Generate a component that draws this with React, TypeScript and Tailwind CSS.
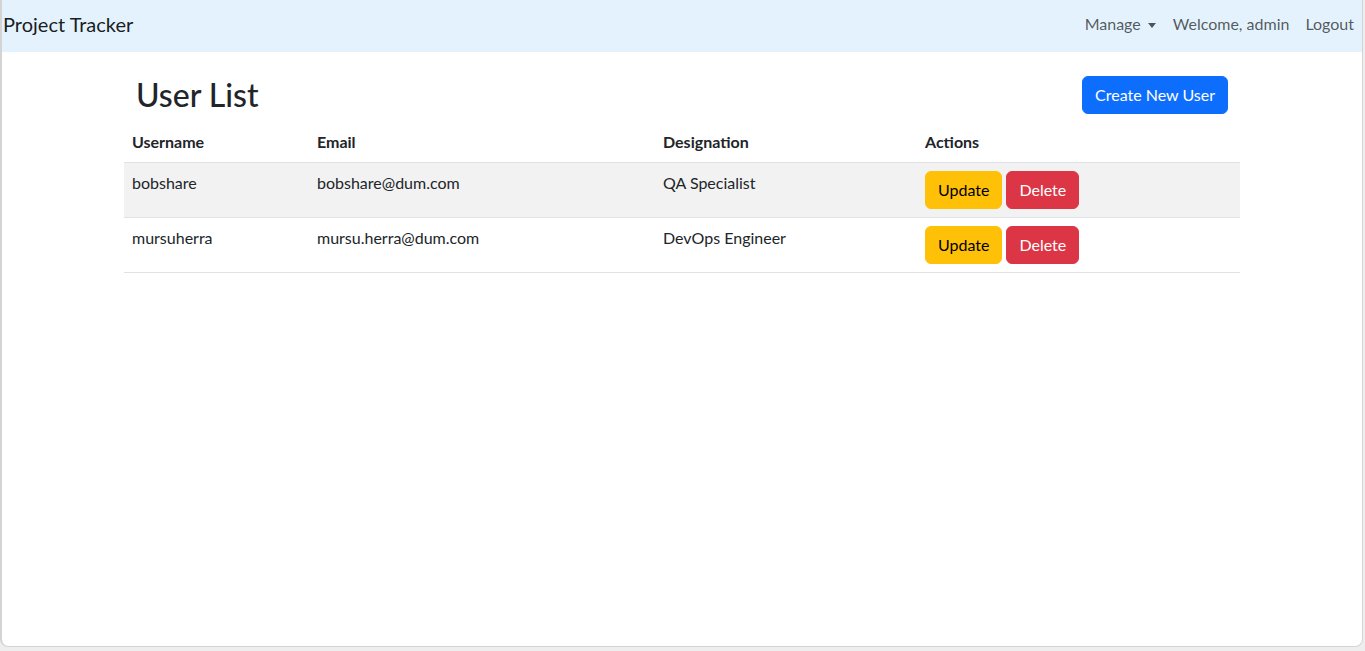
import React from 'react';

type User = {
  username: string;
  email: string;
  designation: string;
};

const users: User[] = [
  { username: 'bobshare', email: 'bobshare@dum.com', designation: 'QA Specialist' },
  { username: 'mursuherra', email: 'mursu.herra@dum.com', designation: 'DevOps Engineer' },
];

const App: React.FC = () => {
  return (
    <div className="h-[651px] w-full bg-[#eeeeee] font-['Lato','Liberation_Sans',sans-serif] text-[#212529] overflow-hidden">
      <div className="h-[647px] w-[1363px] bg-white border-l-2 border-r border-b border-[#d4d4d4] rounded-b-lg overflow-hidden">
        {/* Navbar */}
        <nav className="h-[52px] bg-[#e3f2fd] flex items-center justify-between pl-[1px] pr-0 pb-1">
          <a className="text-[20px] text-black/90 leading-[30px]">Project Tracker</a>
          <ul className="flex items-center text-[16px] text-black/65">
            <li className="pl-2 pr-[9px] flex items-center">
              Manage
              <span className="ml-[7px] mt-[2px] border-t-[5px] border-t-black/65 border-x-[4.5px] border-x-transparent"></span>
            </li>
            <li className="px-2">Welcome, admin</li>
            <li className="px-2">Logout</li>
          </ul>
        </nav>

        {/* Content */}
        <div className="w-[1140px] mx-auto px-3">
          <div className="mt-6 flex items-center justify-between px-3">
            <h2 className="text-[32px] font-medium leading-[38px]">User List</h2>
            <button className="h-[38px] px-3 rounded-md bg-[#0d6efd] text-white text-[16px] border border-[#0d6efd]">
              Create New User
            </button>
          </div>

          <table className="mt-2 w-full text-[16px] text-left align-top">
            <thead>
              <tr className="border-b border-[#dee2e6]">
                <th className="w-[185px] p-2 leading-6 font-bold">Username</th>
                <th className="w-[346px] p-2 leading-6 font-bold">Email</th>
                <th className="w-[262px] p-2 leading-6 font-bold">Designation</th>
                <th className="p-2 leading-6 font-bold">Actions</th>
              </tr>
            </thead>
            <tbody>
              {users.map((u, i) => (
                <tr key={u.username} className={`border-b border-[#dee2e6] ${i % 2 === 0 ? 'bg-[#f2f2f2]' : 'bg-white'}`}>
                  <td className="p-2 leading-6 align-top">{u.username}</td>
                  <td className="p-2 leading-6 align-top">{u.email}</td>
                  <td className="p-2 leading-6 align-top">{u.designation}</td>
                  <td className="p-2 leading-6 align-top">
                    <div className="flex gap-1">
                      <button className="h-[38px] px-3 rounded-md bg-[#ffc107] border border-[#ffc107] text-black">Update</button>
                      <button className="h-[38px] px-3 rounded-md bg-[#dc3545] border border-[#dc3545] text-white">Delete</button>
                    </div>
                  </td>
                </tr>
              ))}
            </tbody>
          </table>
        </div>
      </div>
    </div>
  );
};

export default App;
